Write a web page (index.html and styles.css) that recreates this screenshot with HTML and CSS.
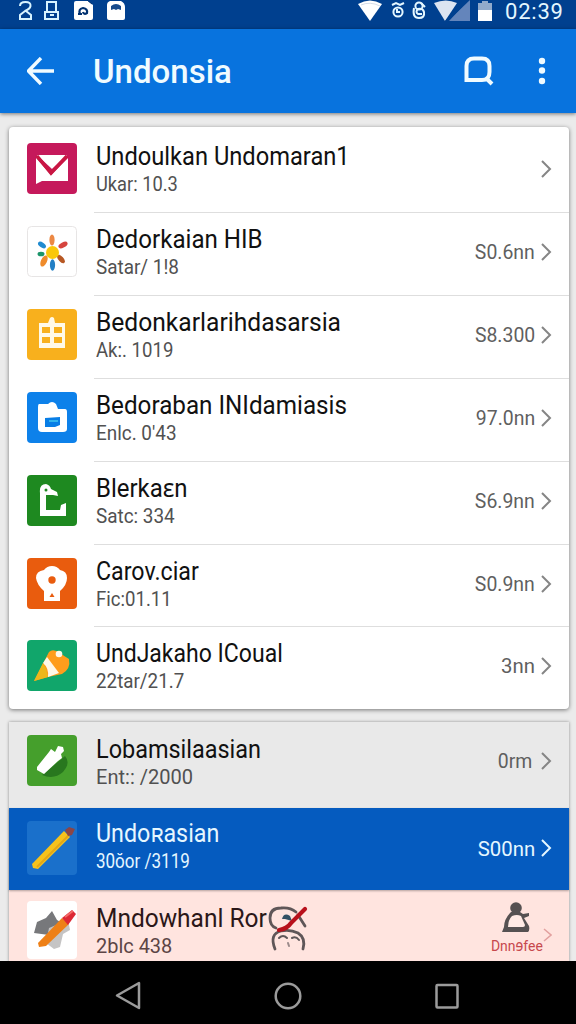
FILE: index.html
```html
<!DOCTYPE html>
<html lang="id">
<head>
<meta charset="utf-8">
<title>Undonsia</title>
<link rel="stylesheet" href="styles.css">
</head>
<body>
<div class="screen">
  <header class="status">
    <svg class="status-left" viewBox="0 0 112 29" fill="none" stroke="#fff" stroke-width="2">
      <path d="M4 6Q4 2 9.500 2T14.500 6Q14 9 9 11L4 15V19H15V15L10 11" stroke="#d8f4ff"/>
      <path d="M31 2H40V12H42V19H29V12H31ZM31 12H40M34 15H38" stroke="#d8f4ff"/>
      <path d="M60 1H72L77 5V18Q77 20 75 20H60Q58 20 58 18V3Q58 1 60 1Z" fill="#fff" stroke="none"/>
      <path d="M64 14Q62 9 67 8Q72 9 71 13Q68 15 67 12M62 14H66" stroke="#00306f" stroke-width="2.200"/>
      <path d="M71 0L76 4" stroke="#00306f" stroke-width="1"/>
      <path d="M94 1H105Q109 3 109 7V18Q109 20 107 20H93Q91 20 91 18V5Q91 2 94 1Z" fill="#fff" stroke="none"/>
      <path d="M95 10V6Q100 2 105 6V10L102 9L100 10L98 9Z" fill="#174b8c" stroke="none"/>
    </svg>
    <svg class="status-right" viewBox="0 0 140 29" fill="none">
      <path d="M0 4Q12-3 24 4L12 21Z" fill="#fff"/><path d="M3 5Q12 1 22 6" stroke="#b8c5d6" stroke-width=".6"/>
      <g stroke="#e4f7ff" stroke-width="2"><circle cx="40" cy="12" r="4.600"/><path d="M34 5L38 3L42 5L46 3M39 9V12H42"/>
      <circle cx="61" cy="6" r="3.600"/><path d="M56 8Q54 18 61 18Q67 18 66 12Q65 8 60 9Q57 12 60 14H64M63 3L67 7"/></g>
      <path d="M76 3Q88-2 99 3L87 21Z" fill="#dce4f1"/><path d="M90 21L112 0V21Z" fill="#6485bb"/><path d="M87 21L101 5L98 1L103 0L104 7L91 21Z" fill="#00408f"/>
      <path d="M120 3H124V1H130V3H134V11H120Z" fill="#91aacb"/><path d="M120 10H134V21H120Z" fill="#fff"/>
    </svg>
    <span class="clock">02:39</span>
  </header>
  <nav class="appbar">
    <svg class="back" viewBox="0 0 28 28"><path d="M27 14H2M14 1L1.500 14L14 27"/></svg>
    <h1>Undonsia</h1>
    <svg class="search" viewBox="0 0 30 30"><path d="M10 2.500H18Q25.500 2.500 25.500 10V16Q25.500 24 18 24H2.500V10Q2.500 2.500 10 2.500ZM21.500 21.500L28 28"/></svg>
    <svg class="more" viewBox="0 0 8 28"><circle cx="4" cy="4" r="3.200"/><circle cx="4" cy="13.500" r="3.200"/><circle cx="4" cy="24" r="3.200"/></svg>
  </nav>
  <main>
    <section class="card">
      <div class="row">
        <svg class="icon" viewBox="0 0 50 51"><rect width="50" height="51" rx="4" fill="#c5195b"/><path d="M10 12H40L25 26Z" fill="#fff"/><path d="M9 15L24 32L41 15V38H15L9 41Z" fill="#fff"/><path d="M10 13L24 30L40 13" fill="none" stroke="#c91643" stroke-width="3.500"/></svg>
        <div class="text"><div class="name"><span class="n1">Undoulkan Undomaran1</span></div><div class="sub"><span class="s1">Ukar: 10.3</span></div></div>
        <svg class="chev" viewBox="0 0 12 20"><path d="M2 2L10 10L2 18"/></svg>
      </div>
      <div class="row">
        <svg class="icon" viewBox="0 0 50 51"><rect x=".5" y=".5" width="49" height="50" rx="4" fill="#fff" stroke="#e7e5e5"/><ellipse cx="25" cy="14" rx="2.600" ry="5.500" fill="#ec8843"/><ellipse cx="36" cy="19" rx="2.500" ry="5" transform="rotate(62 36 19)" fill="#d6443e"/><ellipse cx="34" cy="33" rx="2.500" ry="5" transform="rotate(-42 34 33)" fill="#b75824"/><ellipse cx="25.500" cy="39" rx="2.600" ry="5.800" fill="#2380c5"/><ellipse cx="17" cy="35" rx="3" ry="6" transform="rotate(25 17 35)" fill="#ef8b2b"/><ellipse cx="14" cy="28" rx="3.500" ry="2.300" fill="#1c956a"/><ellipse cx="15" cy="19" rx="2.500" ry="4.500" transform="rotate(-55 15 19)" fill="#218bd0"/><circle cx="25.500" cy="26.500" r="6.500" fill="#fac70a"/></svg>
        <div class="text"><div class="name"><span class="n2">Dedorkaian HIB</span></div><div class="sub"><span class="s2">Satar/ 1!8</span></div></div>
        <span class="value">S0.6nn</span><svg class="chev" viewBox="0 0 12 20"><path d="M2 2L10 10L2 18"/></svg>
      </div>
      <div class="row">
        <svg class="icon" viewBox="0 0 50 51"><rect width="50" height="51" rx="4" fill="#f8b01d"/><path fill-rule="evenodd" d="M12 14H21L23 9Q25 7 27 9L28 14H38V39H12ZM15 18V24H23V18ZM27 18V24H35V18ZM15 28V34H23V28ZM27 28V34H35V28Z" fill="#fff9e8"/></svg>
        <div class="text"><div class="name"><span class="n3">Bedonkarlarihdasarsia</span></div><div class="sub"><span class="s3">Ak:. 1019</span></div></div>
        <span class="value">S8.300</span><svg class="chev" viewBox="0 0 12 20"><path d="M2 2L10 10L2 18"/></svg>
      </div>
      <div class="row">
        <svg class="icon" viewBox="0 0 50 51"><rect width="50" height="51" rx="4" fill="#0d81ea"/><path d="M12 12H21Q25 8 29 12L31 17H38Q40 17 40 20V37Q40 40 36 40H15Q11 40 11 36V15Q11 12 12 12Z" fill="#fff"/><path d="M18 26L33 25V33L28 35H18Z" fill="#087ee6"/><path d="M22 29H31" stroke="#32b5ed" stroke-width="2"/></svg>
        <div class="text"><div class="name"><span class="n4">Bedoraban INIdamiasis</span></div><div class="sub"><span class="s4">Enlc. 0'43</span></div></div>
        <span class="value">97.0nn</span><svg class="chev" viewBox="0 0 12 20"><path d="M2 2L10 10L2 18"/></svg>
      </div>
      <div class="row">
        <svg class="icon" viewBox="0 0 50 51"><rect width="50" height="51" rx="4" fill="#1e8920"/><path d="M13 18Q12 9 19 9Q23 10 24 14L30 17L31 21L26 20L19 20V35H33L34 30L39 28V41H13Z" fill="#fff"/><circle cx="19" cy="15" r="1.500" fill="#1e8920"/></svg>
        <div class="text"><div class="name"><span class="n5">Blerkaɛn</span></div><div class="sub"><span class="s5">Satc: 334</span></div></div>
        <span class="value">S6.9nn</span><svg class="chev" viewBox="0 0 12 20"><path d="M2 2L10 10L2 18"/></svg>
      </div>
      <div class="row row-short">
        <svg class="icon" viewBox="0 0 50 51"><rect width="50" height="51" rx="4" fill="#e95c0e"/><path d="M17 12Q20 8 25 8Q30 8 33 12Q40 13 40 20Q40 27 33 33V43H17V33Q10 27 9 20Q9 13 17 12Z" fill="#fff"/><circle cx="25" cy="22" r="3.700" fill="#e95c0e"/><path d="M22.500 39L25 35L27.500 39Z" fill="#e95c0e"/></svg>
        <div class="text"><div class="name"><span class="n6">Carov.ciar</span></div><div class="sub"><span class="s6">Fic:01.11</span></div></div>
        <span class="value">S0.9nn</span><svg class="chev" viewBox="0 0 12 20"><path d="M2 2L10 10L2 18"/></svg>
      </div>
      <div class="row row-short">
        <svg class="icon" viewBox="0 0 50 51"><rect width="50" height="51" rx="4" fill="#11a66b"/><path d="M7 41L22 12Q26 8 33 13Q37 16 42 19Q44 29 35 34L21 37Z" fill="#ff9d1c"/><path d="M16 23L20 17L32 33L21 37Q22 28 16 23Z" fill="#fff8e8"/><path d="M7 41L16 23Q20 30 21 37Z" fill="#eeb71b"/><circle cx="32" cy="14" r="3.300" fill="#fff8e8"/></svg>
        <div class="text"><div class="name"><span class="n7">UndJakaho ICoual</span></div><div class="sub"><span class="s7">22tar/21.7</span></div></div>
        <span class="value value-wide">3nn</span><svg class="chev" viewBox="0 0 12 20"><path d="M2 2L10 10L2 18"/></svg>
      </div>
    </section>
    <section class="group">
      <div class="row row-grey">
        <svg class="icon" viewBox="0 0 50 51"><rect width="50" height="51" rx="4" fill="#459f2c"/><path d="M15 40L38 21Q44 28 36 37Q27 45 15 40Z" fill="#28771e"/><path d="M10 32L22 17L24 14L28 17L31 11L36 12L37 16L34 19L35 23L31 26L17 39L10 35Z" fill="#fff"/></svg>
        <div class="text"><div class="name"><span class="n8">Lobamsilaasian</span></div><div class="sub"><span class="s8">Ent:: /2000</span></div></div>
        <span class="value">0rm</span><svg class="chev" viewBox="0 0 12 20"><path d="M2 2L10 10L2 18"/></svg>
      </div>
      <div class="row row-active">
        <svg class="icon" viewBox="0 0 50 54"><rect width="50" height="54" rx="4" fill="#1a70cb"/><path d="M5 43L37 10L43 16L11 48L6 47Z" fill="#f6c21c"/><path d="M10 46L42 14" stroke="#e4a615" stroke-width="2"/><path d="M38 9L42 6L48 8L45 14L41 15Z" fill="#8b4546"/></svg>
        <div class="text"><div class="name"><span class="n9">Undoʀasian</span></div><div class="sub"><span class="s9">30ŏor /3119</span></div></div>
        <span class="value value-wide">S00nn</span><svg class="chev" viewBox="0 0 12 20"><path d="M2 2L10 10L2 18"/></svg>
      </div>
      <div class="row row-alert">
        <svg class="icon" viewBox="0 0 50 58"><rect width="50" height="58" rx="4" fill="#fff"/><path d="M7 32L10 21L19 17L25 10L30 19L35 22L22 34Z" fill="#77787b"/><path d="M22 27L34 22L42 24L43 29L36 33L33 46L27 48L19 42Z" fill="#c5c4c4"/><path d="M11 42L35 17L42 23L19 45L12 46Z" fill="#ee8017"/><path d="M35 17L45 9L49 13L41 24Z" fill="#dd2834"/><path d="M38 16L46 10" stroke="#f36a68" stroke-width="2"/></svg>
        <div class="text"><div class="name"><span class="n10">Mndowhanl Ror</span></div><div class="sub"><span class="s10">2blc 438</span></div></div>
        <div class="action">
          <svg viewBox="0 0 30 31"><circle cx="15" cy="6" r="5.800" fill="#565152"/><path d="M10 10H19L22 12L28 11V14L23 16L28 24Q29 28 27 30H1L3 25Q3 17 10 10Z" fill="#565152"/><path d="M11 14Q16 12 20 14L24 23Q24 25 22 25H7Q7 18 11 14Z" fill="#ffeae5"/></svg>
          <span>Dnnɘfee</span>
        </div>
        <svg class="chev chev-faint" viewBox="0 0 10 14"><path d="M2 1L9 7L2 13"/></svg>
        <svg class="scribble" viewBox="0 0 70 66" fill="none" stroke-linecap="round"><g stroke="#5f5658" stroke-width="2.800"><path d="M21 33Q15 31 15 23Q15 13 26 13Q35 12 41 17M43 20L50 31"/><path d="M20 54Q14 39 26 36Q35 34 43 38Q51 43 48 54"/><path d="M24 43Q28 39 32 43M37 43Q41 41 44 45" stroke-width="2"/></g><path d="M27 24Q29 17 35 21L37 26L30 24Z" fill="#345064"/><path d="M33 48L34 51" stroke="#9a8a8a" stroke-width="2"/><path d="M24 35Q32 34 36 28L50 14" stroke="#b8101b" stroke-width="4.200"/></svg>
      </div>
    </section>
  </main>
  <footer class="navbar">
    <svg viewBox="0 0 28 30"><path d="M24 2V27L2 14.500Z"/></svg>
    <svg viewBox="0 0 28 30"><circle cx="14" cy="15" r="12.300"/></svg>
    <svg viewBox="0 0 28 30"><rect x="3.500" y="4" width="21" height="22.500" rx="1"/></svg>
  </footer>
</div>
</body>
</html>
```
FILE: styles.css
```css
* { box-sizing: border-box; }
body { margin: 0; font-family: Roboto, "Noto Sans", sans-serif; }
svg { display: block; flex: none; }
.screen { width: 576px; height: 1024px; display: flex; flex-direction: column; overflow: hidden; background: #ebebeb; }

.status { height: 29px; flex: none; display: flex; background: #00408f; color: #e4f7ff; }
.status-left { width: 112px; height: 29px; margin-left: 16px; }
.status-right { width: 140px; height: 29px; margin-left: 230px; }
.clock { margin-left: 7px; font-size: 22px; line-height: 24px; letter-spacing: .8px; white-space: nowrap; }

.appbar { height: 84px; flex: none; display: flex; align-items: center; background: #0873de; box-shadow: 0 1px 4px rgba(0,0,0,.5); position: relative; }
.back { width: 28px; height: 28px; margin-left: 27px; fill: none; stroke: #f0fbff; stroke-width: 3.4; }
.appbar h1 { margin: 2px 0 0 38px; width: 370px; font-size: 33px; line-height: 40px; font-weight: 500; color: #f0fbff; }
.search { width: 30px; height: 30px; margin-left: 1px; fill: none; stroke: #f0fbff; stroke-width: 4; }
.more { width: 8px; height: 28px; margin-left: 44px; fill: #f0fbff; }

main { flex: 1; min-height: 0; overflow: hidden; padding: 14px 7px 0 9px; display: flex; flex-direction: column; }
.card { flex: none; padding-top: 3px; background: #fff; border-radius: 4px; box-shadow: 0 1px 4px rgba(0,0,0,.5); }
.row { position: relative; display: flex; height: 83px; padding: 13px 17px 0 18px; color: #111; }
.card .row + .row::before { content: ""; position: absolute; left: 85px; right: 0; top: -1px; height: 1px; background: #dedede; }
.card .row-short { height: 82px; }
.icon { width: 50px; height: 51px; }
.text { flex: 1; min-width: 0; margin: 0 0 0 19px; white-space: nowrap; }
.name { height: 28px; line-height: 28px; font-size: 25px; }
.sub { height: 27px; line-height: 27px; font-size: 21px; color: #515151; }
.name span, .sub span { display: inline-block; transform-origin: left; }
.value { margin-top: 13px; font-size: 21px; line-height: 27px; color: #5f5f5f; transform: scaleX(.925); transform-origin: right; }
.value-wide { transform: scaleX(.97); }
.chev { width: 12px; height: 20px; margin: 16px 0 0 5px; fill: none; stroke: #858585; stroke-width: 2; }

/* condensed widths per label */
.n1 { transform: scaleX(.947); }
.n2 { transform: scaleX(.965); }
.n3 { transform: scaleX(.984); }
.n4 { transform: scaleX(.969); }
.n5 { transform: scaleX(.958); }
.n6 { transform: scaleX(.928); }
.n7 { transform: scaleX(.921); }
.n8 { transform: scaleX(.938); }
.n9 { transform: scaleX(.932); }
.n10 { transform: scaleX(.98); }
.s1 { transform: scaleX(.87); }
.s2 { transform: scaleX(.9); }
.s3 { transform: scaleX(.885); }
.s4 { transform: scaleX(.9); }
.s5 { transform: scaleX(.9); }
.s6 { transform: scaleX(.885); }
.s7 { transform: scaleX(.895); }
.s8 { transform: scaleX(.955); }
.s9 { transform: scaleX(.81); }
.s10 { transform: scaleX(.95); }

.group { flex: none; margin-top: 13px; box-shadow: 0 0 3px rgba(0,0,0,.4); }
.row-grey { height: 86px; background: #e9e9e9; }
.row-grey .text { margin-top: 1px; }
.row-grey .value { margin-right: 3px; }
.row-active { height: 82px; background: #055bbf; color: #e6f7ff; box-shadow: 0 1px 2px rgba(0,0,0,.3); z-index: 1; }
.row-active .icon { height: 54px; }
.row-active .sub, .row-active .value { color: #e6f7ff; }
.row-active .value { margin-top: 15px; }
.row-active .chev { stroke: #e6f7ff; margin-top: 17px; }
.row-active .text { margin-top: -1px; }
.row-alert { height: 72px; background: #ffe4df; color: #2b1718; padding-top: 11px; }
.row-alert .icon { height: 58px; }
.row-alert .text { margin-top: 4px; }
.row-alert .sub { color: #5c4545; }
.row-grey .chev { margin-left: 5px; }
.action { display: flex; flex-direction: column; align-items: center; width: 54px; height: 60px; color: #c7484d; font-size: 15.5px; line-height: 18px; }
.action svg { width: 30px; height: 31px; margin: 1px 0 0 2px; }
.action span { margin: 4px 0 0 3px; transform: scaleX(.9); }
.chev-faint { width: 10px; height: 14px; margin: 27px 0 0 0; stroke: #e2a09f; stroke-width: 1.5; }
.scribble { position: absolute; left: 246px; top: 5px; width: 70px; height: 66px; }

.navbar { height: 63px; flex: none; display: flex; justify-content: center; gap: 131px; padding-top: 20px; background: #000; position: relative; }
.navbar svg { width: 28px; height: 30px; fill: none; stroke: #9b9b9b; stroke-width: 2.5; stroke-linejoin: round; }
```
